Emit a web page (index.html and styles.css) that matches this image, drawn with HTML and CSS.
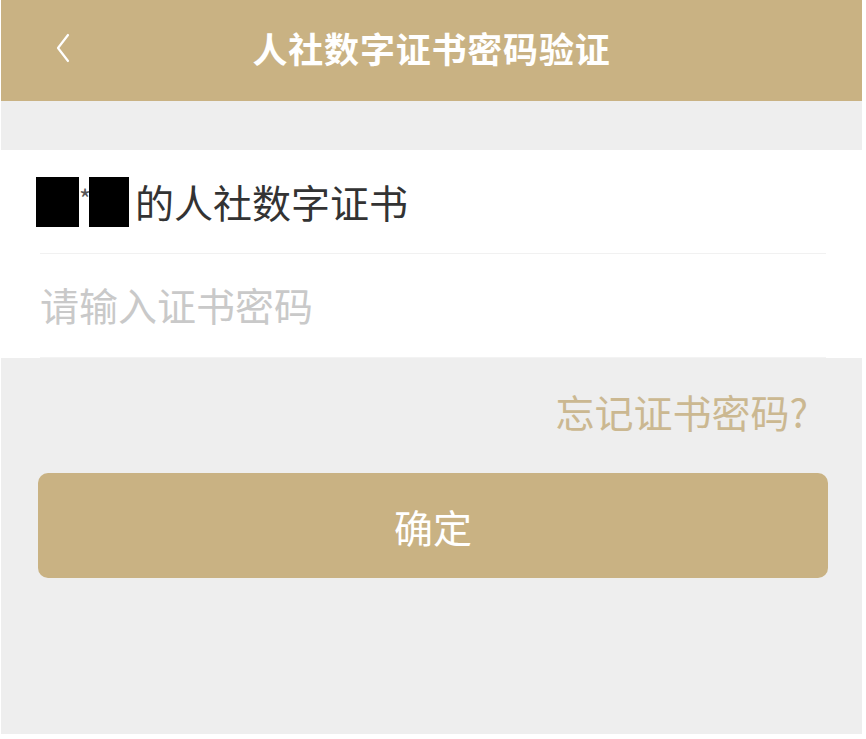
FILE: index.html
```html
<!DOCTYPE html>
<html lang="zh-CN">
<head>
<meta charset="utf-8">
<link rel="stylesheet" href="styles.css">
</head>
<body>
<div class="app">
  <header class="nav">
    <span class="back">
      <svg width="20" height="32" viewBox="0 0 20 32"><polyline points="15,3 5,16 15,29" fill="none" stroke="#fff" stroke-width="2.2" stroke-linecap="round" stroke-linejoin="round"/></svg>
    </span>
    <h1 class="title">人社数字证书密码验证</h1>
  </header>
  <div class="gap"></div>
  <section class="card">
    <div class="row owner"><span class="mask mask-a"></span><span class="star">*</span><span class="mask mask-b"></span><span class="owner-text">的人社数字证书</span></div>
    <div class="row input-row"><span class="placeholder">请输入证书密码</span></div>
  </section>
  <div class="forgot-wrap"><span class="forgot">忘记证书密码?</span></div>
  <div class="btn-wrap"><button class="btn">确定</button></div>
</div>
</body>
</html>
```

FILE: styles.css
```css
html, body {
  margin: 0;
  padding: 0;
  background: #ffffff;
}
body {
  font-family: "Noto Sans CJK SC", "Noto Sans", sans-serif;
}
.app {
  width: 861px;
  height: 734px;
  margin-left: 1px;
  background: #eeeeee;
  display: flex;
  flex-direction: column;
}
.nav {
  height: 101px;
  background: #c9b283;
  display: flex;
  align-items: center;
  position: relative;
  justify-content: center;
}
.back {
  position: absolute;
  left: 52px;
  top: 32px;
  display: flex;
}
.title {
  margin: 0;
  margin-top: -6px;
  color: #ffffff;
  font-size: 35px;
  font-weight: 700;
  letter-spacing: 0.8px;
}
.gap {
  height: 49px;
}
.card {
  background: #ffffff;
  padding: 0 36px 0 39px;
}
.row {
  height: 103px;
  display: flex;
  align-items: center;
}
.owner {
  border-bottom: 1px solid #f1f1f1;
  font-size: 39px;
  color: #333333;
}
.mask {
  display: inline-block;
  background: #000;
  height: 50px;
}
.mask-a {
  width: 43px;
  margin-left: -4px;
}
.mask-b {
  width: 40px;
}
.star {
  font-size: 26px;
  color: #555;
  width: 10px;
  text-align: center;
  align-self: center;
  margin-top: -8px;
}
.owner-text {
  margin-left: 6px;
  margin-top: -2px;
}
.input-row {
  border-bottom: 1px solid #f3f3f3;
}
.placeholder {
  font-size: 39px;
  color: #c9c9c9;
  margin-top: -4px;
}
.forgot-wrap {
  display: flex;
  justify-content: flex-end;
  padding: 28px 54px 0 0;
  height: 86px;
  box-sizing: border-box;
}
.forgot {
  font-size: 39px;
  color: #cbb891;
  line-height: 50px;
}
.btn-wrap {
  padding: 29px 34px 0 37px;
}
.btn {
  width: 100%;
  height: 105px;
  border: none;
  border-radius: 10px;
  background: #c9b283;
  color: #ffffff;
  font-family: "Noto Sans CJK SC", "Noto Sans", sans-serif;
  font-size: 39px;
  padding: 0;
}
```
